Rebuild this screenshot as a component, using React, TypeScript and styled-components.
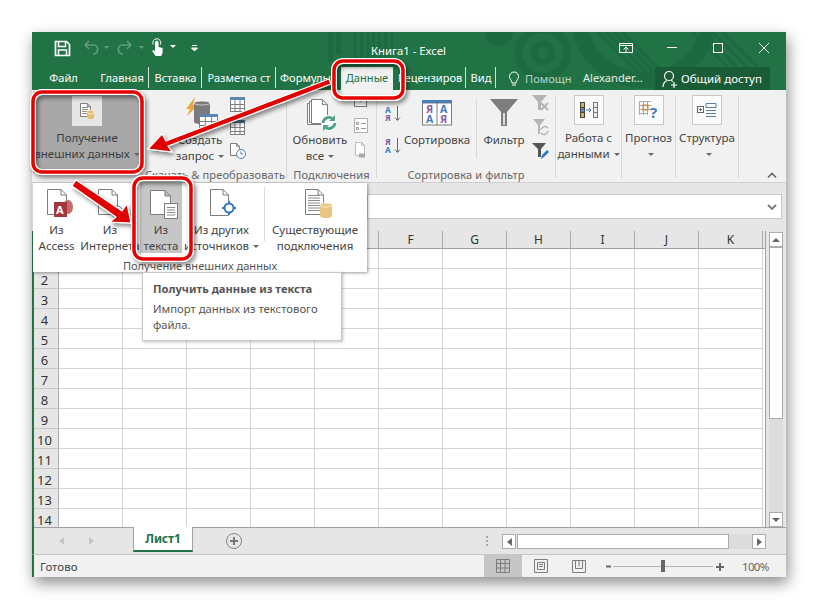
import React from "react";
import styled, { createGlobalStyle } from "styled-components";

const Global = createGlobalStyle`
  html, body { margin: 0; padding: 0; background: #fff; }
  * { box-sizing: border-box; }
  body { font-family: "Noto Sans", "Open Sans", sans-serif; font-size: 11.5px; color: #444; }
`;

const Page = styled.div`
  position: relative;
  width: 818px;
  height: 609px;
  padding: 32px;
  overflow: hidden;
`;

const Excel = styled.div`
  position: relative;
  width: 754px;
  height: 545px;
  display: flex;
  flex-direction: column;
  background: #f1f1f1;
  box-shadow: 2px 6px 14px rgba(0, 0, 0, 0.45);
`;

const Header = styled.header`
  position: relative;
  height: 58px;
  background: #217346;
  color: #fff;
  overflow: hidden;
  flex: none;
`;

const Decor = styled.svg`
  position: absolute;
  left: 0;
  top: 0;
`;

const TitleRow = styled.div`
  position: relative;
  height: 35px;
  display: flex;
  align-items: center;
`;

const Qat = styled.div`
  width: 339px;
  height: 30px;
  flex: none;
`;

const Title = styled.div`
  width: 240px;
  font-size: 11.3px;
  flex: none;
  padding-top: 2px;
  white-space: nowrap;
`;

const WinButtons = styled.div`
  flex: 1;
  height: 30px;
`;

const TabRow = styled.nav`
  position: relative;
  height: 23px;
  display: flex;
  align-items: stretch;
  font-size: 11.1px;
`;

const Tab = styled.div<{ $w: number; $sep?: boolean; $active?: boolean; $left?: number }>`
  width: ${(p) => p.$w}px;
  flex: none;
  overflow: hidden;
  white-space: nowrap;
  line-height: 22px;
  text-align: ${(p) => (p.$left !== undefined ? "left" : "center")};
  padding-left: ${(p) => p.$left ?? 0}px;
  background: ${(p) => (p.$active ? "#f1f1f1" : "transparent")};
  color: ${(p) => (p.$active ? "#217346" : "#fff")};
  position: relative;
  &::after {
    content: "";
    display: ${(p) => (p.$sep ? "block" : "none")};
    position: absolute;
    right: 0;
    top: 0;
    bottom: 2px;
    width: 1px;
    background: #cfe3d8;
  }
`;

const Help = styled.div`
  width: 87px;
  flex: none;
  display: flex;
  align-items: center;
  gap: 4px;
  padding-left: 11px;
  line-height: 22px;
  color: #b9d3c5;
  white-space: nowrap;
`;

const UserName = styled.div`
  width: 72px;
  flex: none;
  line-height: 22px;
  white-space: nowrap;
  color: #e6f0ea;
`;

const Share = styled.div`
  width: 115px;
  flex: none;
  background: #1a5c38;
  display: flex;
  align-items: center;
  gap: 3px;
  padding-left: 7px;
  white-space: nowrap;
  font-size: 11.5px;
`;

const Ribbon = styled.section`
  height: 93px;
  flex: none;
  display: flex;
  background: #f1f1f1;
  border-bottom: 1px solid #d0d0d0;
  position: relative;
`;

const Group = styled.div<{ $w: number }>`
  width: ${(p) => p.$w}px;
  flex: none;
  height: 83px;
  margin-top: 5px;
  border-right: 1px solid #d8d8d8;
  display: flex;
  flex-direction: column;
`;

const GroupBody = styled.div<{ $pad?: number }>`
  height: 72px;
  flex: none;
  display: flex;
  padding-left: ${(p) => p.$pad ?? 0}px;
`;

const GroupLabel = styled.div`
  height: 16px;
  line-height: 16px;
  font-size: 11.1px;
  letter-spacing: 0.1px;
  text-align: center;
  color: #666;
  white-space: nowrap;
`;

const Getter = styled.div`
  width: 108px;
  height: 82px;
  flex: none;
  margin: 1px 3px 0 1px;
  background: #a8a8a8;
  display: flex;
  flex-direction: column;
  align-items: center;
  padding-top: 5px;
  color: #3c3c3c;
  line-height: 16px;
  text-align: center;
  white-space: nowrap;
`;

const GetterBox = styled.div`
  width: 30px;
  height: 30px;
  background: #e6e6e6;
  display: flex;
  align-items: center;
  justify-content: center;
  margin-bottom: 4px;
`;

const BigBtn = styled.div<{ $w: number }>`
  width: ${(p) => p.$w}px;
  flex: none;
  padding-top: 2px;
  display: flex;
  flex-direction: column;
  align-items: center;
  line-height: 16px;
  text-align: center;
  white-space: nowrap;
`;

const BigIcon = styled.div`
  height: 35px;
  flex: none;
  display: flex;
  align-items: flex-start;
  justify-content: center;
`;

const SmallCol = styled.div<{ $top: number; $gap: number; $ml?: number }>`
  width: 18px;
  flex: none;
  margin-left: ${(p) => p.$ml ?? 0}px;
  padding-top: ${(p) => p.$top}px;
  display: flex;
  flex-direction: column;
  align-items: center;
  gap: ${(p) => p.$gap}px;
`;

const VRule = styled.div`
  width: 1px;
  height: 59px;
  margin: 4px 5px 0 5px;
  background: #d8d8d8;
  flex: none;
`;

const BoxBtn = styled.div<{ $w: number }>`
  width: ${(p) => p.$w}px;
  flex: none;
  display: flex;
  flex-direction: column;
  align-items: center;
  line-height: 16px;
  white-space: nowrap;
  text-align: center;
`;

const Box = styled.div`
  width: 30px;
  height: 30px;
  margin-bottom: 5px;
  background: #fbfbfb;
  border: 1px solid #c8c8c8;
  display: flex;
  align-items: center;
  justify-content: center;
`;

const Caret = styled.span`
  display: inline-block;
  width: 0;
  height: 0;
  margin-left: 4px;
  vertical-align: 2px;
  border-left: 3px solid transparent;
  border-right: 3px solid transparent;
  border-top: 3px solid #666;
`;

const Collapse = styled.svg`
  position: absolute;
  right: 9px;
  bottom: 3px;
`;

const FormulaBand = styled.div`
  height: 48px;
  flex: none;
  background: #e6e6e6;
  padding: 11px 4px 0 335px;
`;

const FormulaInput = styled.div`
  height: 25px;
  background: #fff;
  border: 1px solid #c6c6c6;
  display: flex;
  align-items: center;
  justify-content: flex-end;
  padding-right: 3px;
`;

const SheetArea = styled.div`
  height: 296px;
  flex: none;
  display: flex;
  background: #e6e6e6;
  border-left: 2px solid #217346;
`;

const Grid = styled.div`
  width: 732px;
  flex: none;
  overflow: hidden;
  background: #fff;
  border-right: 1px solid #a0a0a0;
`;

const Row = styled.div<{ $h: number }>`
  display: flex;
  height: ${(p) => p.$h}px;
`;

const ColHead = styled.div<{ $w: number }>`
  width: ${(p) => p.$w}px;
  flex: none;
  background: #e6e6e6;
  border-right: 1px solid #ababab;
  border-bottom: 1px solid #9f9f9f;
  text-align: center;
  line-height: 17px;
  font-size: 12px;
  color: #333;
`;

const RowHead = styled.div`
  width: 25px;
  flex: none;
  background: #e6e6e6;
  border-right: 1px solid #ababab;
  border-bottom: 1px solid #c8c8c8;
  text-align: center;
  line-height: 23px;
  font-size: 13px;
  color: #333;
  padding-right: 3px;
`;

const Cell = styled.div<{ $w: number }>`
  width: ${(p) => p.$w}px;
  flex: none;
  border-right: 1px solid #d4d4d4;
  border-bottom: 1px solid #d4d4d4;
`;

const VScroll = styled.div`
  width: 14px;
  margin: 1px 0 0 3px;
  display: flex;
  flex-direction: column;
  flex: none;
  background: #dcdcdc;
`;

const ScrollBtn = styled.div`
  width: 14px;
  height: 15px;
  background: #fff;
  border: 1px solid #ababab;
  display: flex;
  align-items: center;
  justify-content: center;
  flex: none;
`;

const VThumb = styled.div`
  height: 172px;
  background: #fff;
  border: 1px solid #ababab;
  flex: none;
`;

const Spacer = styled.div`
  flex: 1;
`;

const SheetBar = styled.div`
  height: 28px;
  flex: none;
  display: flex;
  align-items: flex-start;
  background: #e6e6e6;
  border-left: 2px solid #217346;
  border-bottom: 1px solid #c6c6c6;
  box-shadow: inset 0 1px 0 #a0a0a0;
`;

const NavArrows = styled.div`
  width: 99px;
  height: 27px;
  flex: none;
  display: flex;
  align-items: center;
  gap: 23px;
  padding-left: 25px;
`;

const SheetTab = styled.div`
  width: 60px;
  height: 25px;
  flex: none;
  background: #fff;
  border: 1px solid #a0a0a0;
  border-top: none;
  border-bottom: 2px solid #217346;
  color: #217346;
  font-size: 12px;
  font-weight: 700;
  letter-spacing: -0.1px;
  text-align: center;
  line-height: 24px;
`;

const AddSheet = styled.div`
  width: 293px;
  height: 27px;
  flex: none;
  padding: 5px 0 0 32px;
`;

const HDots = styled.div`
  width: 16px;
  height: 27px;
  flex: none;
  padding-top: 8px;
`;

const HScroll = styled.div`
  width: 264px;
  height: 15px;
  margin-top: 7px;
  flex: none;
  display: flex;
`;

const HThumb = styled.div`
  width: 212px;
  flex: none;
  margin-left: 1px;
  background: #fff;
  border: 1px solid #ababab;
`;

const HTrack = styled.div`
  flex: 1;
  background: #dcdcdc;
`;

const StatusBar = styled.footer`
  flex: 1;
  display: flex;
  align-items: center;
  background: #f1f1f1;
  border-left: 2px solid #217346;
  padding-left: 6px;
`;

const StatusText = styled.div`
  width: 444px;
  flex: none;
  color: #444;
`;

const ViewBtn = styled.div<{ $on?: boolean; $w: number }>`
  width: ${(p) => p.$w}px;
  height: 22px;
  flex: none;
  background: ${(p) => (p.$on ? "#c6c6c6" : "transparent")};
  display: flex;
  align-items: center;
  justify-content: center;
`;

const Zoomer = styled.svg`
  flex: none;
`;

const Percent = styled.div`
  color: #666;
  margin-left: 6px;
  letter-spacing: -0.7px;
`;

const Popup = styled.div`
  position: absolute;
  left: 1px;
  top: 151px;
  width: 334px;
  height: 89px;
  background: #fff;
  box-shadow: 1px 1px 3px rgba(0, 0, 0, 0.4);
  display: flex;
  flex-direction: column;
  color: #444;
`;

const PopupRow = styled.div`
  height: 70px;
  flex: none;
  display: flex;
`;

const PopupBtn = styled.div<{ $w: number; $on?: boolean }>`
  width: ${(p) => p.$w}px;
  flex: none;
  background: ${(p) => (p.$on ? "#c6c6c6" : "transparent")};
  display: flex;
  flex-direction: column;
  align-items: center;
  padding-top: 4px;
  line-height: 16px;
  text-align: center;
  white-space: nowrap;
  overflow: hidden;
`;

const PopupIcon = styled.svg`
  flex: none;
  margin-bottom: 1px;
`;

const PopupRule = styled.div`
  width: 1px;
  height: 54px;
  margin: 4px 2px 0 3px;
  background: #dcdcdc;
  flex: none;
`;

const PopupLabel = styled.div`
  text-align: center;
  line-height: 19px;
  padding-top: 3px;
  font-size: 11.1px;
  color: #555;
`;

const Tip = styled.div`
  position: absolute;
  left: 110px;
  top: 240px;
  width: 200px;
  height: 69px;
  background: #fff;
  border: 1px solid #c6c6c6;
  box-shadow: 1px 1px 3px rgba(0, 0, 0, 0.25);
  padding: 8px 10px;
  color: #555;
  font-size: 11.3px;
  line-height: 16px;
`;

const TipTitle = styled.div`
  font-weight: 700;
  font-size: 11.2px;
  margin-bottom: 4px;
  white-space: nowrap;
`;

const Marks = styled.svg`
  position: absolute;
  left: 0;
  top: 0;
  pointer-events: none;
`;

const GREY = "#7d7d7d";

const Sheet = ({ x, y, w, h, fill = "#fff", stroke = GREY }: any) => {
  const f = Math.min(6, w / 3);
  return (
    <path
      d={`M${x + 0.5} ${y + 0.5}H${x + w - f}L${x + w - 0.5} ${y + f}V${y + h - 0.5}H${x + 0.5}Z M${x + w - f} ${y + 0.5}V${y + f}H${x + w - 0.5}`}
      fill={fill}
      stroke={stroke}
    />
  );
};

const Lines = ({ x, y, w, n, step = 2, color = "#8a8a8a" }: any) => (
  <>
    {Array.from({ length: n }).map((_, i) => (
      <path key={i} d={`M${x} ${y + i * step + 0.5}h${w}`} stroke={color} />
    ))}
  </>
);

const Cyl = ({ x, y, w, h, fill }: any) => (
  <>
    <rect x={x} y={y + 2} width={w} height={h - 4} fill={fill} />
    <ellipse cx={x + w / 2} cy={y + 2} rx={w / 2} ry={2} fill={fill} stroke="#fff" strokeWidth={0.6} />
    <ellipse cx={x + w / 2} cy={y + h - 2} rx={w / 2} ry={2} fill={fill} />
  </>
);

const MiniTable = ({ x, y, w, h, head = "#5b87b5" }: any) => (
  <>
    <rect x={x + 0.5} y={y + 0.5} width={w - 1} height={h - 1} fill="#fff" stroke={GREY} />
    <rect x={x} y={y} width={w} height={3} fill={head} />
    <path
      d={`M${x} ${y + 7.5}h${w}M${x} ${y + 11.5}h${w}M${x + w / 3} ${y + 3}v${h - 3}M${x + (2 * w) / 3} ${y + 3}v${h - 3}`}
      stroke={GREY}
    />
  </>
);

const AzArrow = ({ top, bottom, topColor, bottomColor }: any) => (
  <svg width={18} height={17} viewBox="0 0 18 17">
    <text x="0" y="7.5" fontSize="8.5" fontWeight="700" fontFamily="Noto Sans" fill={topColor}>{top}</text>
    <text x="0" y="16" fontSize="8.5" fontWeight="700" fontFamily="Noto Sans" fill={bottomColor}>{bottom}</text>
    <path d="M12.5 1V15M10 12.5L12.5 15.5L15 12.5" stroke="#666" fill="none" />
  </svg>
);

const columns = ["A", "B", "C", "D", "E", "F", "G", "H", "I", "J", "K"];
const rows = [1, 2, 3, 4, 5, 6, 7, 8, 9, 10, 11, 12, 13, 14];

export default function App() {
  return (
    <Page>
      <Global />
      <Excel>
        <Header>
          <Decor width={754} height={58} fill="none">
            <g fill="#1e6a40">
              <rect x="296" y="0" width="5" height="30" />
              <rect x="304" y="0" width="5" height="22" />
              <rect x="322" y="0" width="3" height="36" />
              <rect x="328" y="0" width="3" height="36" />
              <rect x="334" y="0" width="3" height="36" />
              <rect x="340" y="0" width="3" height="36" />
              <rect x="346" y="0" width="3" height="30" />
              <rect x="352" y="0" width="3" height="26" />
              <rect x="358" y="0" width="3" height="20" />
              <circle cx="467" cy="0" r="14" />
            </g>
            <circle cx="511" cy="21" r="24" stroke="#1e6a40" strokeWidth="8" />
            <circle cx="511" cy="21" r="9" stroke="#1e6a40" strokeWidth="7" />
            <circle cx="612" cy="-18" r="66" stroke="#1e6a40" strokeWidth="16" />
            <g stroke="#1e6a40" strokeWidth="3">
              <path d="M566 0L612 46M574 0L620 46M582 0L628 46M590 0L636 46M660 0L706 46M670 0L716 46M680 0L726 46M690 0L736 46" />
            </g>
          </Decor>
          <TitleRow>
            <Qat>
              <svg width={339} height={30} viewBox="0 0 339 30" fill="none">
                <path d="M23.5 6.5H34.5L37.500 9.500V20.500H23.500Z" stroke="#fff" strokeWidth="1.700" />
                <path d="M26.500 7V11.500H33.500V7M26.500 20V15H34.500V20" stroke="#fff" strokeWidth="1.500" />
                <g stroke="#5f9c7c" strokeWidth="1.600">
                  <path d="M53 10H62C67 10 67 19 61 19M53 10L57 6M53 10L57 14" />
                  <path d="M99 10H90C85 10 85 19 91 19M99 10L95 6M99 10L95 14" />
                </g>
                <path d="M72 11h5l-2.500 3zM107 11h5l-2.500 3z" fill="#5f9c7c" />
                <path d="M123 11V7.500a1.800 1.800 0 0 1 3.600 0V12l4 1v5l-1.500 3h-5.500l-3.500-5 1.500-1 1.400 1Z" fill="#fff" />
                <path d="M121.200 9.500a4 4 0 1 1 7.200 0" stroke="#fff" />
                <path d="M138 10h6l-3 3z" fill="#fff" />
                <path d="M160 10.500h5M159.500 13h6l-3 3z" stroke="#fff" fill="#fff" strokeWidth="1" />
              </svg>
            </Qat>
            <Title>Книга1 - Excel</Title>
            <WinButtons>
              <svg width={175} height={30} viewBox="0 0 175 30" fill="none" stroke="#fff">
                <path d="M8.500 8.500H21.500V17.500H8.500ZM8.500 10.500H21.500M15 17V12.500M12.500 14.500L15 12L17.500 14.500" />
                <path d="M56 12.500H66" />
                <rect x="102.500" y="8.500" width="9" height="9" />
                <path d="M148 8L158 18M158 8L148 18" />
              </svg>
            </WinButtons>
          </TitleRow>
          <TabRow>
            <Tab $w={63}>Файл</Tab>
            <Tab $w={54} $sep>Главная</Tab>
            <Tab $w={53} $sep>Вставка</Tab>
            <Tab $w={74} $sep>Разметка ст</Tab>
            <Tab $w={65} $left={4}>Формулы</Tab>
            <Tab $w={52} $active>Данные</Tab>
            <Tab $w={73} $sep $left={5}>Рецензиров</Tab>
            <Tab $w={30} $sep>Вид</Tab>
            <Help>
              <svg width={14} height={16} viewBox="0 0 14 16" fill="none" stroke="#fff">
                <path d="M5 12C5 9 2.500 8.500 2.500 5.500a4.500 4.500 0 0 1 9 0C11.500 8.500 9 9 9 12ZM5 14H9" />
              </svg>
              Помощн
            </Help>
            <UserName>Alexander...</UserName>
            <Share>
              <svg width={16} height={18} viewBox="0 0 16 18" fill="none" stroke="#fff" strokeWidth="1.200">
                <circle cx="7" cy="6" r="4.500" />
                <path d="M1 17C1 13 3 11.500 5 10.500M9 10.500L11 11.500M12 12V18M9 15H15" />
              </svg>
              Общий доступ
            </Share>
          </TabRow>
        </Header>

        <Ribbon>
          <Getter>
            <GetterBox>
              <svg width={18} height={18} viewBox="0 0 18 18">
                <Sheet x={2} y={1} w={11} h={14} />
                <Lines x={4} y={5} w={6} n={4} />
                <Cyl x={9} y={8} w={7} h={9} fill="#e7bd6f" />
              </svg>
            </GetterBox>
            <div>Получение</div>
            <div>внешних данных<Caret /></div>
          </Getter>

          <Group $w={143}>
            <GroupBody $pad={27}>
              <BigBtn $w={58}>
                <BigIcon>
                  <svg width={58} height={33} viewBox="0 0 58 33">
                    <path d="M24 0L15 12H19L16 19L27 8H22Z" fill="#e9a83a" />
                    <Cyl x={23} y={4} w={16} h={23} fill="#7b7b7b" />
                    <MiniTable x={28} y={17} w={19} h={14} />
                  </svg>
                </BigIcon>
                <div>Создать</div>
                <div>запрос<Caret /></div>
              </BigBtn>
              <SmallCol $top={2} $gap={8}>
                <svg width={16} height={15} viewBox="0 0 16 15"><MiniTable x={0} y={0} w={15} h={15} /></svg>
                <svg width={16} height={15} viewBox="0 0 16 15"><MiniTable x={0} y={0} w={15} h={15} head="#4f6e8f" /></svg>
                <svg width={18} height={17} viewBox="0 0 18 17" fill="none">
                  <Sheet x={1} y={0} w={10} h={13} />
                  <circle cx="12" cy="11" r="4.500" fill="#fff" stroke="#4a7fb5" />
                  <path d="M12 8.500V11H14" stroke="#4a7fb5" />
                </svg>
              </SmallCol>
            </GroupBody>
            <GroupLabel>Скачать &amp; преобразовать</GroupLabel>
          </Group>

          <Group $w={90}>
            <GroupBody $pad={4}>
              <BigBtn $w={58}>
                <BigIcon>
                  <svg width={40} height={35} viewBox="0 -2 40 35">
                    <Sheet x={7} y={4} w={15} h={22} />
                    <Sheet x={9} y={2} w={15} h={22} />
                    <Sheet x={11} y={0} w={17} h={25} />
                    <circle cx="29" cy="24" r="8" fill="#fff" />
                    <path d="M23 24A6 6 0 0 1 33 20M35 24A6 6 0 0 1 25 28" stroke="#4fa583" strokeWidth="2.800" fill="none" />
                    <path d="M35 16V22H29ZM23 32V26H29Z" fill="#4fa583" />
                  </svg>
                </BigIcon>
                <div>Обновить</div>
                <div>все<Caret /></div>
              </BigBtn>
              <SmallCol $top={0} $gap={8} $ml={3}>
                <svg width={16} height={15} viewBox="0 0 16 15" fill="none">
                  <rect x="1.500" y="0.500" width="12" height="11" fill="#fff" stroke={GREY} />
                  <path d="M7.500 2L10 4.500L7.500 7L5 4.500Z" fill="#4a7fb5" />
                </svg>
                <svg width={16} height={16} viewBox="0 0 16 16" fill="none">
                  <rect x="1.500" y="0.500" width="13" height="14" fill="#fff" stroke="#b0b0b0" />
                  <path d="M3.500 4.500h2v2h-2zM8 5.500h5M3.500 9.500h2v2h-2zM8 10.500h5" stroke="#999" />
                </svg>
                <svg width={16} height={17} viewBox="0 0 16 17" fill="none">
                  <Sheet x={2} y={0} w={10} h={14} stroke="#bbb" />
                  <path d="M6 12.500H12M6 14.500H12" stroke="#aaa" strokeWidth="2" />
                </svg>
              </SmallCol>
            </GroupBody>
            <GroupLabel>Подключения</GroupLabel>
          </Group>

          <Group $w={179}>
            <GroupBody $pad={8}>
              <SmallCol $top={10} $gap={15}>
                <AzArrow top="А" bottom="Я" topColor="#3f7cbf" bottomColor="#8a5aa8" />
                <AzArrow top="Я" bottom="А" topColor="#8a5aa8" bottomColor="#3f7cbf" />
              </SmallCol>
              <BigBtn $w={68}>
                <BigIcon>
                  <svg width={30} height={29} viewBox="0 0 30 29">
                    <rect x="0.500" y="6" width="29" height="22" fill="#fff" stroke={GREY} />
                    <rect x="0" y="3" width="30" height="3" fill="#4a7fb5" />
                    <path d="M15 6V28" stroke={GREY} />
                    <g fontFamily="Noto Sans" fontSize="10.500" fontWeight="700">
                      <text x="4" y="16" fill="#8a5aa8">Я</text>
                      <text x="4" y="26" fill="#3f7cbf">А</text>
                      <text x="18" y="16" fill="#3f7cbf">А</text>
                      <text x="18" y="26" fill="#8a5aa8">Я</text>
                    </g>
                  </svg>
                </BigIcon>
                <div>Сортировка</div>
              </BigBtn>
              <VRule />
              <BigBtn $w={44}>
                <BigIcon>
                  <svg width={28} height={29} viewBox="0 0 28 29">
                    <path d="M0 2H28L17 15V29H11V15Z" fill="#7d7d7d" />
                    <path d="M13 16V28H15V16Z" fill="#dcdcdc" />
                  </svg>
                </BigIcon>
                <div>Фильтр</div>
              </BigBtn>
              <SmallCol $top={0} $gap={7} $ml={6}>
                <svg width={18} height={17} viewBox="0 0 18 17">
                  <path d="M0 0H15L9 7V15H6V7Z" fill="#b4b4b4" />
                  <path d="M9 8L16 15M16 8L9 15" stroke="#b4b4b4" strokeWidth="2" />
                </svg>
                <svg width={18} height={17} viewBox="0 0 18 17" fill="none">
                  <path d="M1 0H13L8 6V15H6V6Z" fill="#b4b4b4" />
                  <path d="M9 11A4 4 0 0 1 16 9M16 12A4 4 0 0 1 9 14" stroke="#b4b4b4" strokeWidth="1.500" />
                </svg>
                <svg width={18} height={17} viewBox="0 0 18 17">
                  <path d="M0 0H14L9 6V14H6V6Z" fill="#555" />
                  <path d="M9 16L10 12L15 7L17 9L12 14Z" fill="#2f79bf" />
                </svg>
              </SmallCol>
            </GroupBody>
            <GroupLabel>Сортировка и фильтр</GroupLabel>
          </Group>

          <Group $w={66}>
            <BoxBtn $w={65}>
              <Box>
                <svg width={20} height={16} viewBox="0 0 20 16">
                  <rect x="1" y="0" width="5" height="16" fill="#444" />
                  <rect x="2" y="1" width="3" height="4" fill="#e0a94a" />
                  <rect x="2" y="6" width="3" height="4" fill="#5b87b5" />
                  <rect x="2" y="11" width="3" height="4" fill="#e0a94a" />
                  <rect x="14" y="0" width="5" height="16" fill="#777" />
                  <rect x="15" y="1" width="3" height="4" fill="#eee" />
                  <rect x="15" y="6" width="3" height="4" fill="#eee" />
                  <rect x="15" y="11" width="3" height="4" fill="#eee" />
                  <path d="M7 8H12M10 6L12 8L10 10" stroke="#4a7fb5" fill="none" />
                </svg>
              </Box>
              <div>Работа с</div>
              <div>данными<Caret /></div>
            </BoxBtn>
          </Group>

          <Group $w={54}>
            <BoxBtn $w={53}>
              <Box>
                <svg width={22} height={20} viewBox="0 0 22 20" fill="none">
                  <path d="M1 1.500H13M1 5.500H13M1 9.500H13M1 13.500H10M1.500 1V15M5.500 1V15M9.500 1V15" stroke="#aaa" />
                  <rect x="5" y="5" width="5" height="5" stroke="#d97b2b" />
                  <text x="12" y="18" fontSize="15" fontWeight="700" fontFamily="Noto Sans" fill="#3f7cbf">?</text>
                </svg>
              </Box>
              <div>Прогноз</div>
              <div><Caret /></div>
            </BoxBtn>
          </Group>

          <Group $w={63}>
            <BoxBtn $w={62}>
              <Box>
                <svg width={20} height={16} viewBox="0 0 20 16" fill="none" stroke="#666">
                  <rect x="0.500" y="4.500" width="6" height="6" />
                  <path d="M2 7.500H5M3.500 6V9" />
                  <path d="M9 1.500H19V5.500H9ZM9 8.500H19M9 11.500H19M9 14.500H19" stroke="#5a7d9f" />
                </svg>
              </Box>
              <div>Структура</div>
              <div><Caret /></div>
            </BoxBtn>
          </Group>

          <Collapse width={10} height={7} viewBox="0 0 10 7" fill="none">
            <path d="M1 5.500L5 1.500L9 5.500" stroke="#666" strokeWidth="1.600" />
          </Collapse>
        </Ribbon>

        <FormulaBand>
          <FormulaInput>
            <svg width={12} height={8} viewBox="0 0 12 8" fill="none">
              <path d="M2 2L6 6L10 2" stroke="#777" strokeWidth="1.800" />
            </svg>
          </FormulaInput>
        </FormulaBand>

        <SheetArea>
          <Grid>
            <Row $h={18}>
              <ColHead $w={25} />
              {columns.map((c) => (
                <ColHead key={c} $w={64}>{c}</ColHead>
              ))}
              <ColHead $w={4} />
            </Row>
            {rows.map((r) => (
              <Row key={r} $h={20}>
                <RowHead>{r}</RowHead>
                {columns.map((c) => (
                  <Cell key={c} $w={64} />
                ))}
              </Row>
            ))}
          </Grid>
          <VScroll>
            <ScrollBtn>
              <svg width={8} height={5}><path d="M0 5L4 1L8 5Z" fill="#666" /></svg>
            </ScrollBtn>
            <VThumb />
            <Spacer />
            <ScrollBtn>
              <svg width={8} height={5}><path d="M0 1L8 1L4 5Z" fill="#666" /></svg>
            </ScrollBtn>
          </VScroll>
        </SheetArea>

        <SheetBar>
          <NavArrows>
            <svg width={6} height={8}><path d="M5 0V8L0 4Z" fill="#c6c6c6" /></svg>
            <svg width={6} height={8}><path d="M1 0V8L6 4Z" fill="#c6c6c6" /></svg>
          </NavArrows>
          <SheetTab>Лист1</SheetTab>
          <AddSheet>
            <svg width={18} height={18} viewBox="0 0 18 18" fill="none">
              <circle cx="9" cy="9" r="7.500" stroke="#888" />
              <path d="M9 5V13M5 9H13" stroke="#777" strokeWidth="2" />
            </svg>
          </AddSheet>
          <HDots>
            <svg width={3} height={11}><path d="M0 1h2M0 5h2M0 9h2" stroke="#aaa" strokeWidth="2" /></svg>
          </HDots>
          <HScroll>
            <ScrollBtn>
              <svg width={5} height={8}><path d="M5 0V8L0 4Z" fill="#666" /></svg>
            </ScrollBtn>
            <HThumb />
            <HTrack />
            <ScrollBtn>
              <svg width={5} height={8}><path d="M0 0V8L5 4Z" fill="#666" /></svg>
            </ScrollBtn>
          </HScroll>
        </SheetBar>

        <StatusBar>
          <StatusText>Готово</StatusText>
          <ViewBtn $on $w={38}>
            <svg width={14} height={14} viewBox="0 0 14 14" fill="none" stroke="#7d7d7d">
              <path d="M.5.500h13v13H.500zM.5 4.500h13M.5 9h13M4.500.500v13M9 .500v13" />
            </svg>
          </ViewBtn>
          <ViewBtn $w={38}>
            <svg width={14} height={14} viewBox="0 0 14 14" fill="none" stroke="#7d7d7d">
              <path d="M.5.500h13v13H.500zM3.500 3.500h7v7h-7zM5 5.500h4M5 7.500h4" />
            </svg>
          </ViewBtn>
          <ViewBtn $w={38}>
            <svg width={14} height={13} viewBox="0 0 14 13" fill="none" stroke="#7d7d7d">
              <path d="M.5.500h13v12H.500zM3.500.500v8h7v-8M7 .500v6" />
            </svg>
          </ViewBtn>
          <Zoomer width={138} height={14} viewBox="0 0 138 14" fill="none">
            <path d="M8 7.500h5" stroke="#666" strokeWidth="2" />
            <path d="M15 7.500h100" stroke="#b5b5b5" />
            <rect x="63" y="1" width="4" height="12" fill="#666" />
            <path d="M118 8h8M122 4v8" stroke="#666" strokeWidth="2" />
          </Zoomer>
          <Percent>100%</Percent>
        </StatusBar>

        <Popup>
          <PopupRow>
            <PopupBtn $w={47}>
              <PopupIcon width={47} height={34} viewBox="0 0 47 34">
                <Sheet x={14} y={2} w={20} h={26} />
                <ellipse cx="35" cy="20" rx="5" ry="7" fill="#c96a6a" />
                <rect x="21" y="15" width="13" height="15" fill="#a4373a" />
                <text x="23" y="27" fontSize="11" fontWeight="700" fontFamily="Noto Sans" fill="#fff">A</text>
              </PopupIcon>
              <div>Из</div>
              <div>Access</div>
            </PopupBtn>
            <PopupBtn $w={60}>
              <PopupIcon width={60} height={34} viewBox="0 0 60 34">
                <Sheet x={18} y={2} w={20} h={26} />
                <circle cx="37" cy="25" r="6" fill="#fff" stroke="#4a7fb5" />
              </PopupIcon>
              <div>Из</div>
              <div>Интернета</div>
            </PopupBtn>
            <PopupBtn $w={42} $on>
              <PopupIcon width={42} height={34} viewBox="0 0 42 34">
                <Sheet x={10} y={3} w={21} h={25} />
                <rect x="24.500" y="16.500" width="13" height="15" fill="#fff" stroke={GREY} />
                <Lines x={27} y={20} w={8} n={4} step={2.500} />
              </PopupIcon>
              <div>Из</div>
              <div>текста</div>
            </PopupBtn>
            <PopupBtn $w={79}>
              <PopupIcon width={79} height={34} viewBox="0 0 79 34">
                <Sheet x={28} y={2} w={19} h={27} />
                <path d="M47 14V28M40 21H54" stroke="#2f79bf" strokeWidth="2" />
                <circle cx="47" cy="21" r="4.500" fill="#fff" stroke="#2f79bf" strokeWidth="2" />
              </PopupIcon>
              <div>Из других</div>
              <div>источников<Caret /></div>
            </PopupBtn>
            <PopupRule />
            <PopupBtn $w={96}>
              <PopupIcon width={96} height={34} viewBox="0 0 96 34">
                <Sheet x={38} y={2} w={19} h={26} />
                <Lines x={41} y={8} w={12} n={7} step={2.500} />
                <Cyl x={53} y={16} w={12} h={15} fill="#e9c682" />
              </PopupIcon>
              <div>Существующие</div>
              <div>подключения</div>
            </PopupBtn>
          </PopupRow>
          <PopupLabel>Получение внешних данных</PopupLabel>
        </Popup>

        <Tip>
          <TipTitle>Получить данные из текста</TipTitle>
          <div>Импорт данных из текстового файла.</div>
        </Tip>
      </Excel>

      <Marks width={818} height={609} viewBox="0 0 818 609" fill="none">
        <defs>
          <filter id="drop" x="-20%" y="-20%" width="140%" height="140%">
            <feDropShadow dx="2" dy="3" stdDeviation="2" floodColor="#000" floodOpacity="0.45" />
          </filter>
        </defs>
        <g filter="url(#drop)">
          <path d="M329 79L166 141L162 134L148 149L172 152L168 146L331 84Z" fill="#e00000" stroke="#fff" strokeWidth="1.200" />
          <path d="M76 180L122 211L127 204L131 223L110 222L116 217L72 186Z" fill="#e00000" stroke="#fff" strokeWidth="1.200" />
          <rect x="334" y="61" width="69" height="37" rx="9" stroke="#fff" strokeWidth="6" />
          <rect x="334" y="61" width="69" height="37" rx="9" stroke="#e60000" strokeWidth="3.500" />
          <rect x="33" y="92" width="109" height="80" rx="9" stroke="#fff" strokeWidth="6" />
          <rect x="33" y="92" width="109" height="80" rx="9" stroke="#e60000" strokeWidth="3.500" />
          <rect x="134" y="178" width="57" height="81" rx="9" stroke="#fff" strokeWidth="6" />
          <rect x="134" y="178" width="57" height="81" rx="9" stroke="#e60000" strokeWidth="3.500" />
        </g>
      </Marks>
    </Page>
  );
}
